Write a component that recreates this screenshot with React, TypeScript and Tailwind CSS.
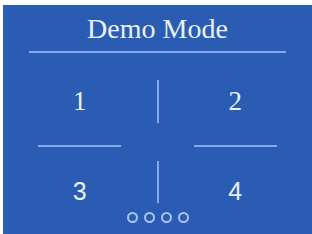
export default function App() {
  return (
    <div className="w-[312px] h-[234px] bg-white pt-[5px] pl-[3px] overflow-hidden">
      <div className="h-full bg-[#2b5cb4] flex flex-col text-[#eaf1fb]">
        {/* Title */}
        <div className="pt-[8px] text-center text-[28px] leading-[32px] font-['Liberation_Serif',serif]">
          Demo Mode
        </div>
        <div className="mt-[6px] mx-auto w-[257px] h-[2px] bg-[#86a9e6]" />

        {/* Row 1 */}
        <div className="mt-[27px] h-[43px] flex items-center font-['Liberation_Serif',serif] text-[27px] leading-none">
          <div className="flex-1 text-center">1</div>
          <div className="w-[2px] h-full bg-[#86a9e6]" />
          <div className="flex-1 text-center">2</div>
        </div>

        {/* Dividers */}
        <div className="mt-[22px] flex">
          <div className="flex-1 flex justify-center">
            <div className="w-[83px] h-[2px] bg-[#86a9e6]" />
          </div>
          <div className="w-[2px]" />
          <div className="flex-1 flex justify-center">
            <div className="w-[83px] h-[2px] bg-[#86a9e6]" />
          </div>
        </div>

        {/* Row 2 */}
        <div className="mt-[14px] h-[42px] flex font-['Liberation_Sans',sans-serif] text-[25px] leading-none">
          <div className="flex-1 flex items-center justify-center pt-[18px]">3</div>
          <div className="w-[2px] h-full bg-[#86a9e6]" />
          <div className="flex-1 flex items-center justify-center pt-[18px]">4</div>
        </div>

        {/* Page dots */}
        <div className="mt-[9px] flex justify-center gap-[6px]">
          <div className="w-[11px] h-[11px] rounded-full border-2 border-[#a9c4ef]" />
          <div className="w-[11px] h-[11px] rounded-full border-2 border-[#a9c4ef]" />
          <div className="w-[11px] h-[11px] rounded-full border-2 border-[#a9c4ef]" />
          <div className="w-[11px] h-[11px] rounded-full border-2 border-[#a9c4ef]" />
        </div>
      </div>
    </div>
  );
}
